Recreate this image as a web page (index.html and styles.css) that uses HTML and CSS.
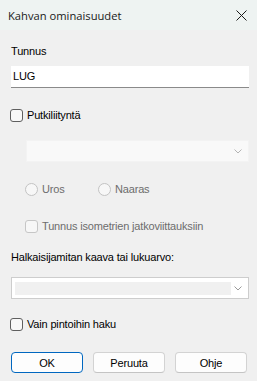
FILE: index.html
```html
<!DOCTYPE html>
<html>
<head>
<meta charset="utf-8">
<link rel="stylesheet" href="styles.css">
</head>
<body>
<div class="window">
  <div class="titlebar">
    <span class="title">Kahvan ominaisuudet</span>
    <svg class="close" width="11" height="11" viewBox="0 0 11 11"><path d="M0.5 0.5 L10.5 10.5 M10.5 0.5 L0.5 10.5" stroke="#1a1a1a" stroke-width="1" fill="none"/></svg>
  </div>
  <div class="content">
    <div class="label first">Tunnus</div>
    <div class="textbox">LUG</div>

    <div class="check-row gap-check1">
      <span class="checkbox"></span><span class="check-label">Putkiliityntä</span>
    </div>

    <div class="indent">
      <div class="combo disabled gap-combo1">
        <svg class="chev" width="8" height="5" viewBox="0 0 8 5"><path d="M0.5 0.5 L4 4 L7.5 0.5" stroke="#b4b4b4" fill="none"/></svg>
      </div>
      <div class="radio-row">
        <label class="radio-item"><span class="radio"></span><span class="dis-text">Uros</span></label>
        <label class="radio-item"><span class="radio"></span><span class="dis-text">Naaras</span></label>
      </div>
      <div class="check-row gap-check2">
        <span class="checkbox dis"></span><span class="check-label dis-text">Tunnus isometrien jatkoviittauksiin</span>
      </div>
    </div>

    <div class="label gap-label2">Halkaisijamitan kaava tai lukuarvo:</div>
    <div class="combo edit gap-combo2">
      <span class="combo-inner"></span>
      <svg class="chev" width="8" height="5" viewBox="0 0 8 5"><path d="M0.5 0.5 L4 4 L7.5 0.5" stroke="#9a9a9a" fill="none"/></svg>
    </div>

    <div class="check-row gap-check3">
      <span class="checkbox"></span><span class="check-label">Vain pintoihin haku</span>
    </div>

    <div class="buttons">
      <button class="btn default">OK</button>
      <button class="btn">Peruuta</button>
      <button class="btn">Ohje</button>
    </div>
  </div>
</div>
</body>
</html>
```

FILE: styles.css
```css
html, body {
  margin: 0;
  padding: 0;
}
body {
  width: 257px;
  height: 381px;
  background: #f0f0f0;
  font-family: "Liberation Sans", Arial, sans-serif;
  font-size: 11px;
  letter-spacing: -0.17px;
  color: #000;
  overflow: hidden;
}
.window {
  width: 257px;
  height: 381px;
  display: flex;
  flex-direction: column;
}
.titlebar {
  height: 30px;
  background: #eef3f2;
  display: flex;
  align-items: center;
  justify-content: space-between;
  padding: 0 10px 0 8px;
  flex-shrink: 0;
}
.title {
  font-family: "Open Sans", "Noto Sans", sans-serif;
  font-size: 11.2px;
  letter-spacing: 0;
  color: #1a1a1a;
}
.close {
  margin-top: 1px;
}
.content {
  padding: 0 8px 0 11px;
  display: flex;
  flex-direction: column;
}
.label {
  line-height: 13px;
  height: 13px;
}
.first { margin-top: 15px; }
.textbox {
  margin-top: 8px;
  height: 21px;
  background: #fff;
  border-bottom: 1px solid #8a8a8a;
  line-height: 21px;
  padding-left: 2px;
  box-sizing: content-box;
}
.check-row {
  display: flex;
  align-items: center;
  height: 13px;
  line-height: 13px;
}
.checkbox {
  width: 11px;
  height: 11px;
  border: 1px solid #5f5f5f;
  border-radius: 3px;
  background: #f8f8f8;
  margin-left: -1px;
  flex-shrink: 0;
}
.checkbox.dis {
  border-color: #c6c6c6;
  background: #f7f7f7;
}
.check-label {
  margin-left: 4px;
}
.dis-text {
  color: #6d6d6d;
}
.gap-check1 { margin-top: 21px; }
.indent {
  padding-left: 15px;
  display: flex;
  flex-direction: column;
}
.combo {
  height: 22px;
  box-sizing: border-box;
  display: flex;
  align-items: center;
  justify-content: flex-end;
  padding-right: 6px;
}
.combo.disabled {
  background: #f9f9f9;
  border: 1px solid #f3f3f3;
}
.gap-combo1 { margin-top: 18px; }
.chev { flex-shrink: 0; }
.radio-row {
  margin-top: 21px;
  display: flex;
  height: 13px;
  line-height: 13px;
}
.radio-item {
  display: flex;
  align-items: center;
  width: 73px;
}
.radio {
  width: 11px;
  height: 11px;
  border: 1px solid #c3c3c3;
  border-radius: 50%;
  background: #f7f7f7;
  margin-left: -1px;
  margin-right: 4px;
}
.gap-check2 { margin-top: 24px; }
.gap-label2 { margin-top: 18px; }
.combo.edit {
  background: #fff;
  border: 1px solid #cdcdcd;
  padding: 3px 6px 3px 3px;
  justify-content: space-between;
}
.combo-inner {
  width: 216px;
  height: 13px;
  background: #f0f0f0;
}
.gap-combo2 { margin-top: 13px; }
.gap-check3 { margin-top: 19px; }
.buttons {
  margin-top: 21px;
  display: flex;
  gap: 10px;
}
.btn {
  width: 72px;
  height: 21px;
  box-sizing: border-box;
  background: #fdfdfd;
  border: 1px solid #d3d3d3;
  border-bottom-color: #c4c4c4;
  border-radius: 4px;
  font-family: "Liberation Sans", Arial, sans-serif;
  font-size: 11px;
  letter-spacing: -0.17px;
  color: #000;
  padding: 0;
}
.btn.default {
  border: 1px solid #0067c0;
}
```
